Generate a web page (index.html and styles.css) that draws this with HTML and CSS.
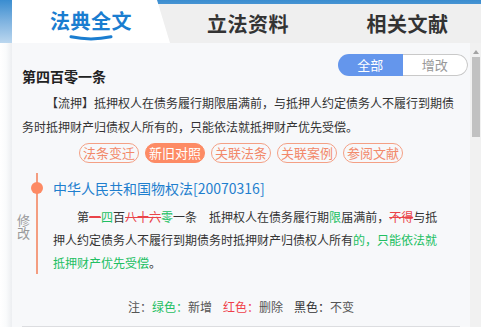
FILE: index.html
```html
<!DOCTYPE html>
<html lang="zh-CN">
<head>
<meta charset="utf-8">
<title>法典全文</title>
<link rel="stylesheet" href="styles.css">
</head>
<body>
<div class="app">
  <header class="top">
    <nav class="tabs">
      <div class="tab active">
        <span class="tab-label">法典全文</span>
        <svg class="tab-ul" width="44" height="6" viewBox="0 0 44 6"><path d="M2 1.8 Q22 6 42 1.8" fill="none" stroke="#1a7dd0" stroke-width="3" stroke-linecap="round"/></svg>
      </div>
      <div class="tab t2">立法资料</div>
      <div class="tab t3">相关文献</div>
    </nav>
  </header>
  <main class="body">
    <div class="edge"></div>
    <section class="panel">
      <div class="head">
        <h2 class="art-title">第四百零一条</h2>
        <div class="toggle"><span class="on">全部</span><span class="off">增改</span></div>
      </div>
      <p class="art-text">【流押】抵押权人在债务履行期限届满前，与抵押人约定债务人不履行到期债务时抵押财产归债权人所有的，只能依法就抵押财产优先受偿。</p>
      <div class="pills">
        <span class="pill">法条变迁</span>
        <span class="pill on">新旧对照</span>
        <span class="pill">关联法条</span>
        <span class="pill">关联案例</span>
        <span class="pill">参阅文献</span>
      </div>
      <div class="timeline">
        <div class="rail"><span class="dot"></span><span class="rail-label">修改</span></div>
        <div class="tl-body">
          <div class="law">中华人民共和国物权法[20070316]</div>
          <p class="diff">第<del>一</del><ins>四</ins>百<del>八十六</del><ins>零</ins>一条　抵押权人在债务履行期<ins>限</ins>届满前，<del>不得</del>与抵押人约定债务人不履行到期债务时抵押财产归债权人所有<ins>的，只能依法就抵押财产优先受偿</ins>。</p>
        </div>
      </div>
      <div class="note"><span>注：</span><span class="g">绿色：</span><span>新增</span><span class="r">红色：</span><span>删除</span><span class="k">黑色：</span><span>不变</span></div>
      <div class="rule"></div>
    </section>
    <div class="scrollbar"><span class="arrow"></span><span class="thumb"></span></div>
  </main>
</div>
</body>
</html>
```

FILE: styles.css
```css
* { box-sizing: border-box; }
html, body { margin: 0; padding: 0; }
body {
  width: 481px;
  height: 327px;
  overflow: hidden;
  background: #fff;
  font-family: "Noto Sans CJK SC", "Noto Sans", sans-serif;
  color: #333;
}
.app { display: flex; flex-direction: column; height: 327px; }

.top {
  height: 43px;
  flex: none;
  background: linear-gradient(180deg, #3a8dd0 0%, #7fb3e0 50%, #bbd7ef 100%);
}
.tabs {
  margin-left: 12px;
  height: 43px;
  display: flex;
  background: linear-gradient(180deg, transparent 4px, #efefef 4px);
}
.tab {
  height: 43px;
  display: flex;
  align-items: center;
  justify-content: center;
  font-size: 20px;
  font-weight: bold;
  color: #333;
  letter-spacing: 0.5px;
}
.tab.active {
  width: 158px;
  flex-direction: column;
  justify-content: flex-start;
  padding-top: 9px;
  background: #fff;
  clip-path: polygon(0 0, 145px 0, 158px 100%, 0 100%);
  color: #1a7dd0;
}
.tab-label { line-height: 24px; }
.tab-ul { display: block; margin-top: 2px; }
.t2 { width: 156px; padding-top: 4px; }
.t3 { flex: 1; padding-left: 8px; padding-top: 4px; }

.body { display: flex; flex: 1; min-height: 0; }
.edge {
  width: 12px;
  flex: none;
  background: linear-gradient(90deg, #ffffff 0%, #fafbfc 50%, #eceef1 100%);
}
.panel {
  width: 458px;
  flex: none;
  background: #f7f8fa;
  padding: 11px 10px 0 10px;
}
.head {
  display: flex;
  justify-content: space-between;
  align-items: flex-start;
}
.art-title {
  margin: 12px 0 0 0;
  font-size: 14px;
  line-height: 20px;
  font-weight: bold;
  color: #222;
}
.toggle {
  display: flex;
  width: 130px;
  height: 22px;
  margin-right: -8px;
  border-radius: 11px;
  overflow: hidden;
  font-size: 13px;
  line-height: 22px;
}
.toggle span { flex: 1; text-align: center; }
.toggle .on { background: #6496ec; color: #fff; }
.toggle .off {
  background: #fff;
  color: #999;
  border: 1px solid #c9c9c9;
  border-left: none;
  border-radius: 0 11px 11px 0;
  line-height: 20px;
}
.art-text {
  margin: 5px 0 0 0;
  font-size: 12px;
  line-height: 24px;
  text-indent: 2em;
  color: #333;
}
.pills {
  display: flex;
  justify-content: center;
  gap: 6px;
  margin-top: 4px;
}
.pill {
  width: 60px;
  height: 20px;
  border: 1px solid #f4a085;
  border-radius: 10px;
  color: #f2896a;
  font-size: 13px;
  line-height: 18px;
  text-align: center;
}
.pill.on { background: #fd8b65; border-color: #fd8b65; color: #fff; }

.timeline {
  display: flex;
  margin: 10px 0 0 -10px;
  padding-bottom: 3px;
}
.rail {
  width: 41px;
  flex: none;
  position: relative;
  background: linear-gradient(90deg, transparent 24px, #f49d80 24px, #f49d80 26px, transparent 26px);
}
.dot {
  position: absolute;
  top: 9px;
  left: 19px;
  width: 12px;
  height: 12px;
  border-radius: 50%;
  background: #fd8a64;
}
.rail-label {
  display: block;
  width: 13px;
  margin-left: 5px;
  padding-top: 40px;
  font-size: 13px;
  line-height: 13px;
  color: #999;
}
.tl-body {
  flex: 1;
  padding: 5px 18px 0 0;
}
.law {
  font-size: 14px;
  line-height: 20px;
  color: #1f7fce;
}
.diff {
  margin: 7px 0 0 0;
  font-size: 12px;
  line-height: 23px;
  text-indent: 2em;
  color: #333;
}
.diff ins { text-decoration: none; color: #21bf62; }
.diff del { text-decoration: line-through; color: #ea4349; }

.note {
  margin-top: 20px;
  text-align: center;
  font-size: 12px;
  line-height: 20px;
  color: #555;
}
.note .g { color: #1fbf63; }
.note .r { color: #ef4049; margin-left: 11px; }
.note .k { color: #333; margin-left: 11px; }
.rule { margin-top: 9px; height: 1px; background: #dcdde0; }

.scrollbar {
  width: 11px;
  flex: none;
  background: #f1f1f1;
  display: flex;
  flex-direction: column;
  align-items: center;
}
.arrow {
  margin-top: 7px;
  width: 0;
  height: 0;
  border-left: 3.5px solid transparent;
  border-right: 3.5px solid transparent;
  border-bottom: 4px solid #a3a3a3;
}
.thumb {
  margin-top: 3px;
  width: 8px;
  height: 80px;
  background: #c1c1c1;
}
```
